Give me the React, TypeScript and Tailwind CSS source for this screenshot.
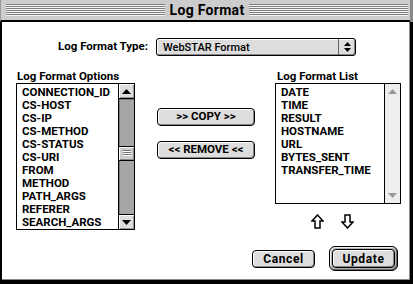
import React from "react";

const leftItems = [
  "CONNECTION_ID",
  "CS-HOST",
  "CS-IP",
  "CS-METHOD",
  "CS-STATUS",
  "CS-URI",
  "FROM",
  "METHOD",
  "PATH_ARGS",
  "REFERER",
  "SEARCH_ARGS",
];
const rightItems = ["DATE", "TIME", "RESULT", "HOSTNAME", "URL", "BYTES_SENT", "TRANSFER_TIME"];

function Stripes() {
  return (
    <div className="flex-1 h-[12px] bg-[repeating-linear-gradient(to_bottom,#808080_0px,#808080_1px,#f4f4f4_1px,#f4f4f4_2px)]" />
  );
}

function Tri({ dir, color }: { dir: "up" | "down"; color: string }) {
  return (
    <svg width="9" height="5" viewBox="0 0 9 5">
      {dir === "up" ? (
        <polygon points="4.5,0 9,5 0,5" fill={color} />
      ) : (
        <polygon points="0,0 9,0 4.5,5" fill={color} />
      )}
    </svg>
  );
}

function ActiveScroll() {
  return (
    <div className="w-[16px] h-full flex flex-col border-l border-black">
      <div className="h-[15px] border-b border-black bg-[#dddddd] shadow-[inset_1px_1px_0_#fff,inset_-1px_-1px_0_#999] flex items-center justify-center">
        <Tri dir="up" color="#000" />
      </div>
      <div className="flex-1 flex flex-col bg-[#a6a6a6] shadow-[inset_1px_1px_0_#777]">
        <div className="h-[47px]" />
        <div className="h-[15px] border-y border-black bg-[#cccccc] shadow-[inset_1px_1px_0_#fff,inset_-1px_-1px_0_#888] flex items-center justify-center">
          <svg width="8" height="7" viewBox="0 0 8 7">
            <rect x="0" y="0" width="8" height="1" fill="#777" />
            <rect x="0" y="2" width="8" height="1" fill="#777" />
            <rect x="0" y="4" width="8" height="1" fill="#777" />
            <rect x="0" y="1" width="8" height="1" fill="#fff" />
            <rect x="0" y="3" width="8" height="1" fill="#fff" />
            <rect x="0" y="5" width="8" height="1" fill="#fff" />
          </svg>
        </div>
      </div>
      <div className="h-[15px] border-t border-black bg-[#dddddd] shadow-[inset_1px_1px_0_#fff,inset_-1px_-1px_0_#999] flex items-center justify-center">
        <Tri dir="down" color="#000" />
      </div>
    </div>
  );
}

function InactiveScroll() {
  return (
    <div className="w-[16px] h-full flex flex-col justify-between border-l border-black bg-[#eeeeee]">
      <div className="h-[15px] flex items-center justify-center">
        <Tri dir="up" color="#999" />
      </div>
      <div className="h-[15px] flex items-center justify-center">
        <Tri dir="down" color="#999" />
      </div>
    </div>
  );
}

function List({ items, h, active }: { items: string[]; h: string; active: boolean }) {
  return (
    <div className={`${h} w-full border border-black flex bg-white`}>
      <div className="flex-1 pt-[2px] pl-[5px] overflow-hidden">
        {items.map((it) => (
          <div key={it} className="h-[13px] leading-[13px] text-[11.5px] font-bold whitespace-nowrap">
            {it}
          </div>
        ))}
      </div>
      {active ? <ActiveScroll /> : <InactiveScroll />}
    </div>
  );
}

function Button({ label, w }: { label: string; w: string }) {
  return (
    <div
      className={`${w} h-[18px] rounded-[4px] border border-black bg-[#dddddd] shadow-[inset_1px_1px_0_#fff,inset_-1px_-1px_0_#888] flex items-center justify-center text-[11.5px] font-bold leading-none`}
    >
      {label}
    </div>
  );
}

function Arrow({ dir }: { dir: "up" | "down" }) {
  return (
    <svg width="13" height="15" viewBox="0 0 13 15">
      {dir === "up" ? (
        <polygon
          points="6.5,1 12,7 9,7 9,14 4,14 4,7 1,7"
          fill="white"
          stroke="black"
          strokeWidth="1.5"
          strokeLinejoin="miter"
        />
      ) : (
        <polygon
          points="4,1 9,1 9,8 12,8 6.5,14 1,8 4,8"
          fill="white"
          stroke="black"
          strokeWidth="1.5"
          strokeLinejoin="miter"
        />
      )}
    </svg>
  );
}

export default function App() {
  return (
    <div className="w-[413px] h-[284px] flex bg-white text-black font-['Roboto',sans-serif] overflow-hidden">
      <div className="w-[410px] h-[284px] flex flex-col">
        {/* Title bar */}
        <div className="h-[22px] bg-[#cccccc] border-b-2 border-black border-l border-l-[#999] flex items-center pl-[5px] pr-[2px]">
          <Stripes />
          <div className="px-[5px] text-[14px] font-bold leading-none tracking-[0.3px]">Log Format</div>
          <Stripes />
        </div>
        {/* Body */}
        <div className="h-[257px] border-l-2 border-black border-r border-r-[#888] flex flex-col pt-[16px] pb-[8px]">
          {/* Popup row */}
          <div className="h-[18px] flex items-center">
            <div className="w-[146px] text-right text-[11.5px] font-bold">Log Format Type:</div>
            <div className="ml-[8px] w-[200px] h-[18px] rounded-[3px] border border-black bg-[#dddddd] shadow-[inset_1px_1px_0_#fff,inset_-1px_-1px_0_#888] flex items-center">
              <div className="flex-1 pl-[6px] text-[11px] font-medium leading-none">WebSTAR Format</div>
              <div className="w-[17px] h-full border-l border-[#666] flex flex-col items-center justify-center gap-[2px]">
                <svg width="7" height="10" viewBox="0 0 7 10">
                  <polygon points="3.5,0 7,4 0,4" fill="#000" />
                  <polygon points="0,6 7,6 3.5,10" fill="#000" />
                </svg>
              </div>
            </div>
          </div>
          {/* Columns */}
          <div className="mt-[14px] flex">
            <div className="ml-[14px] w-[119px] flex flex-col">
              <div className="h-[13px] leading-[13px] text-[11.5px] font-bold pl-[1px]">Log Format Options</div>
              <List items={leftItems} h="h-[147px]" active />
            </div>
            <div className="ml-[22px] w-[98px] flex flex-col">
              <div className="mt-[38px]">
                <Button label=">> COPY >>" w="w-[98px]" />
              </div>
              <div className="mt-[15px]">
                <Button label="<< REMOVE <<" w="w-[98px]" />
              </div>
            </div>
            <div className="ml-[20px] w-[126px] flex flex-col">
              <div className="h-[13px] leading-[13px] text-[11.5px] font-bold pl-[2px]">Log Format List</div>
              <List items={rightItems} h="h-[121px]" active={false} />
              <div className="mt-[10px] flex pl-[36px] gap-[17px]">
                <Arrow dir="up" />
                <Arrow dir="down" />
              </div>
            </div>
          </div>
          {/* Bottom buttons */}
          <div className="mt-auto flex items-center justify-end pr-[11px]">
            <div className="w-[63px] h-[18px] rounded-[4px] border border-black bg-[#dddddd] shadow-[inset_1px_1px_0_#fff,inset_-1px_-1px_0_#888] flex items-center justify-center text-[12px] font-bold tracking-[0.6px] leading-none">
              Cancel
            </div>
            <div className="ml-[14px] w-[69px] h-[25px] rounded-[6px] border border-black bg-[#b4b4b4] shadow-[inset_1px_1px_0_#eee,inset_-1px_-1px_0_#666] p-[2px] flex">
              <div className="flex-1 rounded-[4px] border border-black bg-[#dddddd] shadow-[inset_1px_1px_0_#fff,inset_-1px_-1px_0_#888] flex items-center justify-center text-[12px] font-bold tracking-[0.6px] leading-none">
                Update
              </div>
            </div>
          </div>
        </div>
        <div className="h-[1px] bg-[#888] border-l-2 border-black" />
        <div className="h-[4px] bg-black" />
      </div>
      <div className="w-[3px] flex flex-col">
        <div className="h-[22px] bg-[#888]" />
        <div className="flex-1 bg-black" />
      </div>
    </div>
  );
}
